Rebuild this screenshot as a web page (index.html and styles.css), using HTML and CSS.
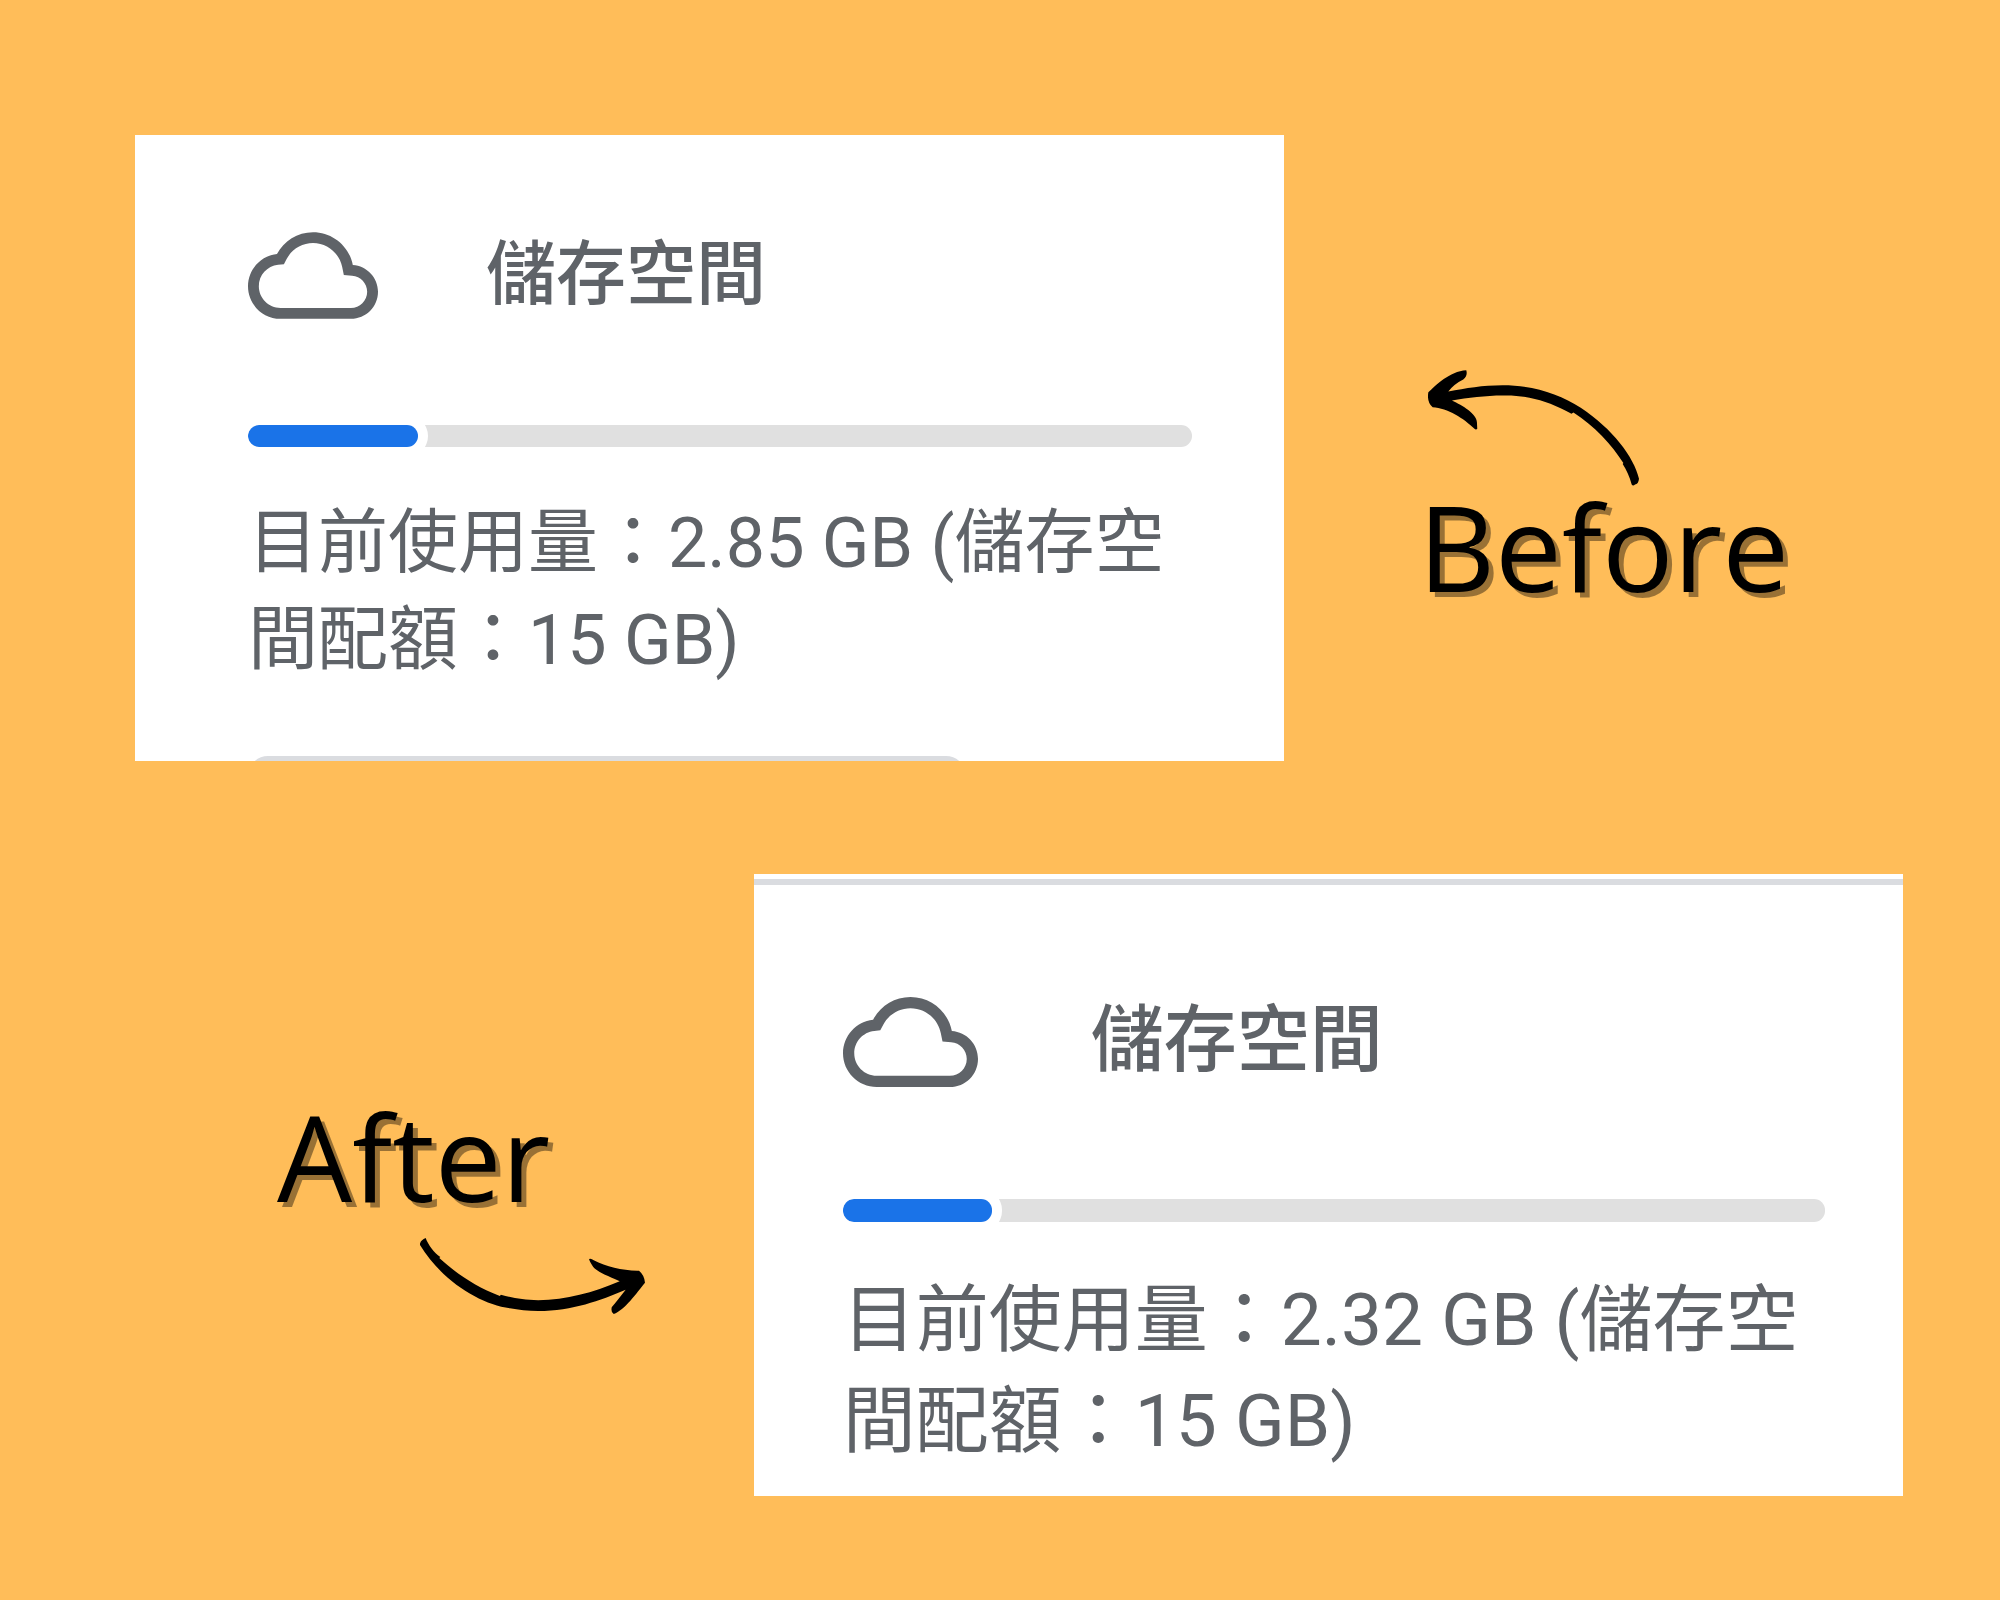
FILE: index.html
```html
<!DOCTYPE html>
<html lang="zh-Hant">
<head>
  <meta charset="utf-8">
  <meta name="viewport" content="width=device-width, initial-scale=1">
  <title>儲存空間</title>
  <link rel="stylesheet" href="styles.css">
</head>
<body>
  <main class="board">
    <section class="row">
      <article class="card card-before">
        <header class="card-head">
          <svg class="cloud" viewBox="0 4 24 16" aria-hidden="true">
            <path d="M19.35 10.04C18.67 6.59 15.64 4 12 4 9.11 4 6.6 5.64 5.35 8.04 2.34 8.36 0 10.91 0 14c0 3.31 2.69 6 6 6h13c2.76 0 5-2.24 5-5 0-2.64-2.05-4.78-4.65-4.96zM19 18H6c-2.21 0-4-1.79-4-4 0-2.05 1.53-3.76 3.56-3.97l1.07-.11.5-.95C8.08 7.14 9.94 6 12 6c2.62 0 4.88 1.86 5.39 4.43l.3 1.5 1.53.11c1.56.1 2.78 1.41 2.78 2.96 0 1.65-1.35 3-3 3z"/>
          </svg>
          <h2 class="card-title">儲存空間</h2>
        </header>
        <progress class="usage-bar" value="18" max="100" aria-label="儲存空間"></progress>
        <p class="usage">目前使用量：2.85 GB (儲存空間配額：15 GB)</p>
        <div class="button-edge" aria-hidden="true"><span class="button-outline"></span></div>
      </article>
      <aside class="note note-before">
        <svg class="arrow arrow-before" viewBox="86 59 634 347" aria-hidden="true">
          <path d="M87 125C110 105 150 62 201 59Q206 75 192 87Q165 100 147 123C200 113 250 104 310 104C400 104 480 130 545 172C640 235 705 320 720 385Q718 402 708 402Q702 408 698 402C692 380 682 358 671 341L673 338C640 285 585 225 523 186L517 190L500 181C440 150 380 133 310 135C260 135 205 142 158 150C190 165 232 190 233 215L234 235Q230 240 224 233C195 205 145 172 100 170Q82 155 87 125Z"/>
        </svg>
        <p class="note-text">Before</p>
      </aside>
    </section>

    <section class="row">
      <aside class="note note-after">
        <p class="note-text">After</p>
        <svg class="arrow arrow-after" viewBox="510 444 676 228" aria-hidden="true">
          <path d="M510 460Q514 449 527 444C535 465 552 488 571 501L568 504C615 547 675 590 750 618L753 614C790 625 820 630 865 631C950 630 1030 608 1110 574C1085 562 1045 548 1030 530Q1018 512 1018 507Q1024 504 1032 511C1070 530 1120 543 1168 542Q1184 555 1186 578C1160 610 1125 660 1092 672Q1083 668 1086 652C1100 635 1115 615 1128 599C1050 632 970 662 865 663C835 663 805 660 780 655C690 643 575 572 510 465Z"/>
        </svg>
      </aside>
      <article class="card card-after">
        <header class="card-head">
          <svg class="cloud" viewBox="0 4 24 16" aria-hidden="true">
            <path d="M19.35 10.04C18.67 6.59 15.64 4 12 4 9.11 4 6.6 5.64 5.35 8.04 2.34 8.36 0 10.91 0 14c0 3.31 2.69 6 6 6h13c2.76 0 5-2.24 5-5 0-2.64-2.05-4.78-4.65-4.96zM19 18H6c-2.21 0-4-1.79-4-4 0-2.05 1.53-3.76 3.56-3.97l1.07-.11.5-.95C8.08 7.14 9.94 6 12 6c2.62 0 4.88 1.86 5.39 4.43l.3 1.5 1.53.11c1.56.1 2.78 1.41 2.78 2.96 0 1.65-1.35 3-3 3z"/>
          </svg>
          <h2 class="card-title">儲存空間</h2>
        </header>
        <progress class="usage-bar" value="15.2" max="100" aria-label="儲存空間"></progress>
        <p class="usage">目前使用量：2.32 GB (儲存空間配額：15 GB)</p>
      </article>
    </section>
  </main>
</body>
</html>
```
FILE: styles.css
```css
* {
  box-sizing: border-box;
}

body {
  margin: 0;
  background: #ffbd59;
  color: #5f6368;
  font-family: Roboto, "Noto Sans CJK TC", sans-serif;
}

h2,
p {
  margin: 0;
}

.board {
  display: flex;
  flex-direction: column;
  gap: 113px;
  min-height: 100vh;
  padding: 135px 97px 104px 135px;
}

.row {
  display: flex;
  align-items: flex-start;
}

/* Cards */

.card {
  flex: none;
  width: 65%;
  background: #fff;
}

.card-before {
  padding: 97px 92px 0 113px;
  font-size: 70px;
  line-height: 97px;
}

.card-after {
  border-top: 5px solid #fff;
  padding: 0 78px 24px 89px;
  font-size: 73px;
  line-height: 101px;
  background: linear-gradient(#dadce0 6px, #fff 6px);
}

.card-head {
  display: flex;
  align-items: flex-start;
}

.card-before .card-head {
  gap: 108px;
  margin-bottom: 106px;
}

.card-after .card-head {
  gap: 113px;
  margin-bottom: 112px;
  padding-top: 118px;
}

.cloud {
  display: block;
  fill: #5f6368;
}

.card-before .cloud {
  width: 130px;
  height: 87px;
}

.card-after .cloud {
  width: 135px;
  height: 90px;
}

.card-title {
  font-size: inherit;
  font-weight: 500;
  line-height: 86px;
}

.usage-bar {
  display: block;
  width: 100%;
  height: 22px;
  border: 0;
  border-radius: 11px;
  overflow: hidden;
  appearance: none;
  background: #e0e0e0;
}

.usage-bar::-webkit-progress-bar {
  background: #e0e0e0;
}

.usage-bar::-webkit-progress-value {
  border-radius: 11px;
  background: #1a73e8;
  box-shadow: 0 0 0 10px #fff;
}

.card-before .usage-bar {
  margin-bottom: 48px;
}

.card-after .usage-bar {
  height: 23px;
  margin-bottom: 48px;
}

/* Top edge of the button that is cut off by the card */

.button-edge {
  height: 5px;
  margin-top: 67px;
  overflow: hidden;
}

.button-outline {
  display: block;
  width: 76%;
  height: 60px;
  border: 5px solid #dadce0;
  border-radius: 20px;
}

/* Handwritten notes */

.note {
  flex: 1;
  color: #000;
}

.note-before {
  padding: 235px 0 0 134px;
}

.note-after {
  padding: 222px 0 0 142px;
}

.note-text {
  font-family: "Open Sans", "Noto Sans", sans-serif;
  font-size: 119px;
  line-height: 120px;
  text-shadow: 5px 5px 0 rgba(0, 0, 0, 0.4);
}

.arrow {
  display: block;
  fill: #000;
}

.arrow-before {
  width: 211px;
  height: 116px;
  margin-left: 10px;
}

.arrow-after {
  width: 225px;
  height: 76px;
  margin: 22px 0 0 143px;
}
```
